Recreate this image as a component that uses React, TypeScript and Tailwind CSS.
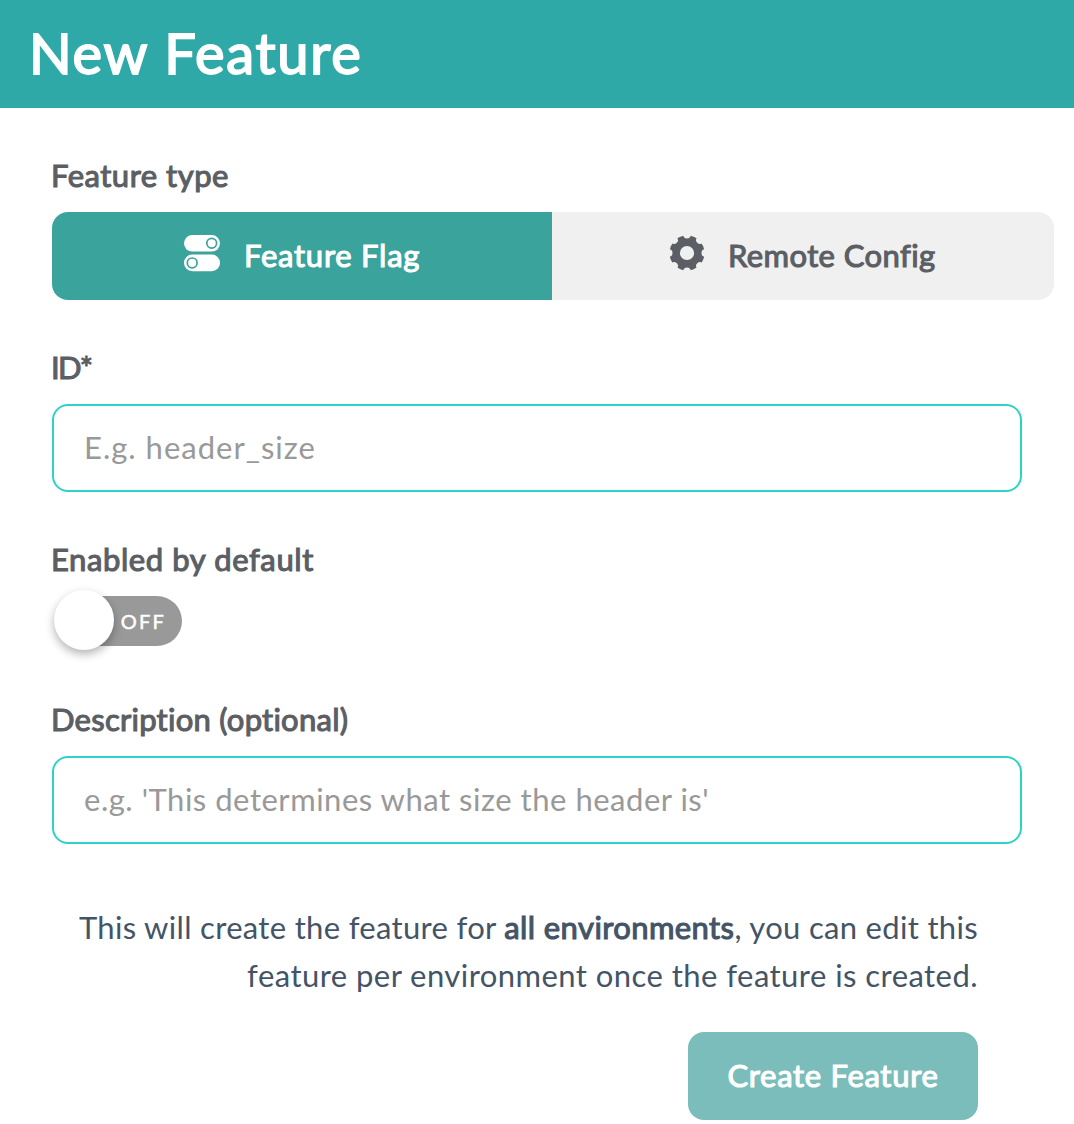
import { useId, type ReactNode } from "react";

function TogglesIcon() {
  return (
    <svg width="38" height="38" viewBox="0 0 38 38" fill="none" className="shrink-0">
      <rect x="1" y="1" width="36" height="16.6" rx="8.3" fill="white" />
      <rect x="1" y="20.6" width="36" height="16.6" rx="8.3" fill="white" />
      <circle cx="28.7" cy="9.3" r="4.9" stroke="#3aa39b" strokeWidth="1.7" />
      <circle cx="9.2" cy="28.9" r="4.9" stroke="#3aa39b" strokeWidth="1.7" />
    </svg>
  );
}

const NOTCHES = [0, 45, 90, 135, 180, 225, 270, 315];

function GearIcon() {
  const id = useId();
  return (
    <svg width="36" height="36" viewBox="-18 -18 36 36" className="shrink-0">
      <mask id={id} maskUnits="userSpaceOnUse" x="-18" y="-18" width="36" height="36">
        <circle r="17.5" fill="white" />
        <circle r="7.1" fill="black" />
        {NOTCHES.map((a) => (
          <circle key={a} cx="18.2" r="3.7" fill="black" transform={`rotate(${a})`} />
        ))}
      </mask>
      <rect x="-18" y="-18" width="36" height="36" fill="#5b5e64" mask={`url(#${id})`} />
    </svg>
  );
}

function Label({ children, className }: { children: ReactNode; className: string }) {
  return (
    <div className="-ml-px h-12 text-[31px] leading-[47px] whitespace-nowrap text-[#5b5e64] [-webkit-text-stroke:1.1px]">
      <span className={className}>{children}</span>
    </div>
  );
}

const inputClass =
  "mt-3 block h-22 w-[970px] rounded-2xl border-2 border-[#2bd4c6] bg-white px-[30px] pb-[3px] text-[31px] text-[#1a2634] outline-none placeholder:text-[#999999] placeholder:opacity-100";

export default function App() {
  return (
    <div className="h-[1124px] w-[1074px] overflow-hidden bg-white font-['Lato',sans-serif] [font-variant-ligatures:none]">
      <header className="flex h-27 items-center bg-[#2fa8a8] pb-[3px] pl-[29px]">
        <h1 className="text-[56px] leading-none tracking-[1.7px] text-white [-webkit-text-stroke:1.8px]">New Feature</h1>
      </header>

      <main className="pt-11 pl-13">
        <Label className="tracking-[0.5px]">Feature type</Label>
        <div className="mt-3 flex h-22 w-[1002px] overflow-hidden rounded-2xl text-[31px] [-webkit-text-stroke:1.1px]">
          <button className="flex w-[500px] items-center bg-[#3aa39b] pl-[131px] text-white">
            <span className="-mt-[6px]"><TogglesIcon /></span>
            <span className="-mt-[2px] ml-[23px] tracking-[0.75px] whitespace-nowrap">Feature Flag</span>
          </button>
          <button className="flex flex-1 items-center bg-[#f0f0f0] pl-[117px] text-[#5b5e64]">
            <span className="-mt-[6px]"><GearIcon /></span>
            <span className="-mt-[2px] ml-[23px] tracking-[0.4px] whitespace-nowrap">Remote Config</span>
          </button>
        </div>

        <div className="mt-11">
          <Label className="tracking-[-1.7px]">ID*</Label>
          <input className={`${inputClass} tracking-[1px]`} placeholder="E.g. header_size" />
        </div>

        <div className="mt-11">
          <Label className="tracking-[0.6px]">Enabled by default</Label>
          <button className="relative mt-3 flex h-[50px] w-[130px] items-center justify-end rounded-full bg-[linear-gradient(to_right,transparent_30px,#999999_30px)] pr-[16px] text-[20px] tracking-[2.2px] text-white [-webkit-text-stroke:0.5px]">
            OFF
            <span className="absolute -top-[6px] left-[2px] size-[60px] rounded-full bg-white shadow-[0_4px_10px_rgba(0,0,0,0.3)]" />
          </button>
        </div>

        <div className="mt-[50px]">
          <Label className="tracking-[0.25px]">Description (optional)</Label>
          <input className={`${inputClass} tracking-[0.52px]`} placeholder="e.g. 'This determines what size the header is'" />
        </div>

        <div className="mt-15 flex w-[926px] flex-col items-end text-[31px] whitespace-nowrap text-[#445467]">
          <p className="h-12 leading-[47px] tracking-[0.32px]">
            This will create the feature for <strong className="font-normal tracking-[0.4px] [-webkit-text-stroke:1.1px]">all environments</strong>, you can edit this
          </p>
          <p className="h-12 leading-[47px] tracking-[0.45px]">feature per environment once the feature is created.</p>
          <button className="mt-8 flex h-22 w-[290px] items-center justify-center rounded-2xl bg-[#7abdba] pb-[2px] text-[31px] tracking-[0.7px] text-white [-webkit-text-stroke:1.1px]">
            Create Feature
          </button>
        </div>
      </main>
    </div>
  );
}
